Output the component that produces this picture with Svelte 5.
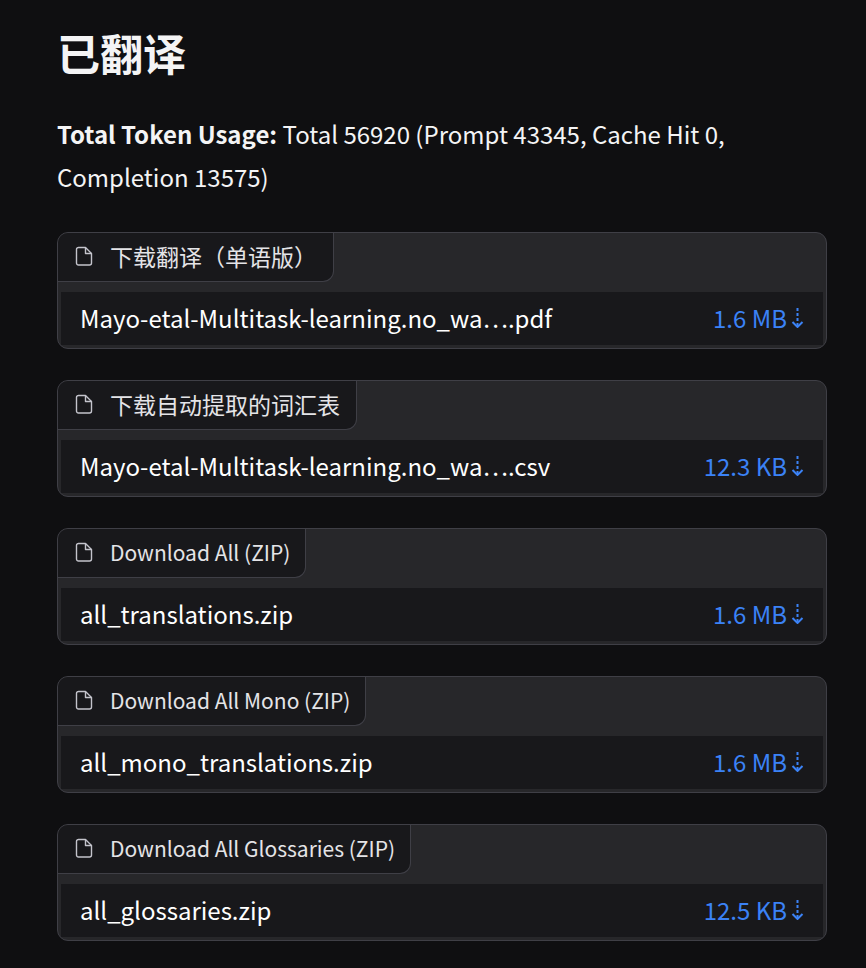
<script lang="ts">
	type DownloadFile = {
		label: string;
		lang: 'zh' | 'en';
		name: string;
		size: string;
	};

	const usage = { total: 56920, prompt: 43345, cacheHit: 0, completion: 13575 };

	const files: DownloadFile[] = [
		{ label: '下载翻译（单语版）', lang: 'zh', name: 'Mayo-etal-Multitask-learning.no_wa….pdf', size: '1.6 MB' },
		{ label: '下载自动提取的词汇表', lang: 'zh', name: 'Mayo-etal-Multitask-learning.no_wa….csv', size: '12.3 KB' },
		{ label: 'Download All (ZIP)', lang: 'en', name: 'all_translations.zip', size: '1.6 MB' },
		{ label: 'Download All Mono (ZIP)', lang: 'en', name: 'all_mono_translations.zip', size: '1.6 MB' },
		{ label: 'Download All Glossaries (ZIP)', lang: 'en', name: 'all_glossaries.zip', size: '12.5 KB' },
	];
</script>

<main class="page">
	<h1>已翻译</h1>
	<p class="usage">
		<strong>Total Token Usage:</strong>
		Total {usage.total} (Prompt {usage.prompt}, Cache Hit {usage.cacheHit}, Completion {usage.completion})
	</p>

	<div class="files">
		{#each files as file}
			<section class="card">
				<h2 class="tab" class:zh={file.lang === 'zh'}>
					<svg class="file-icon" viewBox="0 0 18 20" aria-hidden="true">
						<path d="M3.500 1.500h7l6 6v9.500a2 2 0 0 1-2 2h-11a2 2 0 0 1-2-2v-13.500a2 2 0 0 1 2-2z" />
						<path d="M10.500 1.500v6h6" />
					</svg>
					{file.label}
				</h2>
				<div class="row">
					<span class="name">{file.name}</span>
					<a class="download" href="#{file.name}" download={file.name}>
						{file.size}
						<svg class="arrow" viewBox="0 0 13 20" aria-hidden="true">
							<path class="dashes" d="M6.500 0v19" />
							<path d="M1.500 14l5 5 5-5" />
						</svg>
					</a>
				</div>
			</section>
		{/each}
	</div>
</main>

<style>
	:global(body) {
		background: #0f0f11;
	}

	.page {
		padding: 22px 39px 26px 57px;
		color: #f4f4f5;
		font-family: "Noto Sans CJK SC", "Noto Sans", sans-serif;
	}

	h1 {
		margin: 0;
		font-size: 43px;
		line-height: 60px;
		font-weight: 700;
	}

	.usage {
		margin: 30px 0 34px;
		font-size: 24px;
		line-height: 43px;
	}

	.usage strong { font-weight: 700; }

	/* ── Files ── */
	.files {
		display: flex;
		flex-direction: column;
		gap: 31px;
	}

	.card {
		display: flex;
		flex-direction: column;
		align-items: flex-start;
		gap: 10px;
		padding-bottom: 3px;
		background: #27272a;
		border: 1px solid #3f3f46;
		border-radius: 11px;
		overflow: hidden;
	}

	.tab {
		display: flex;
		align-items: center;
		gap: 17px;
		margin: 0;
		padding: 0 15px 2px 17px;
		background: #18181b;
		border: solid #3f3f46;
		border-width: 0 1px 1px 0;
		border-bottom-right-radius: 11px;
		color: #e4e4e7;
		font-size: 21px;
		line-height: 46px;
		font-weight: 400;
	}

	.tab.zh {
		padding-right: 16px;
		font-size: 23px;
	}

	.file-icon {
		width: 18px;
		height: 20px;
		fill: none;
		stroke: #c4c4cc;
		stroke-width: 1.4;
		stroke-linejoin: round;
	}

	.row {
		display: flex;
		align-self: stretch;
		justify-content: space-between;
		margin: 0 3px;
		padding: 0 19px 2px;
		background: #18181b;
		color: #fff;
		font-size: 24px;
		line-height: 51px;
	}

	.download {
		display: flex;
		align-items: center;
		gap: 4px;
		color: #3b82f6;
		text-decoration: none;
		white-space: nowrap;
	}

	.download:hover { text-decoration: underline; }

	.arrow {
		width: 13px;
		height: 20px;
		fill: none;
		stroke: currentColor;
		stroke-width: 2;
	}

	.dashes { stroke-dasharray: 3 2; }
</style>
